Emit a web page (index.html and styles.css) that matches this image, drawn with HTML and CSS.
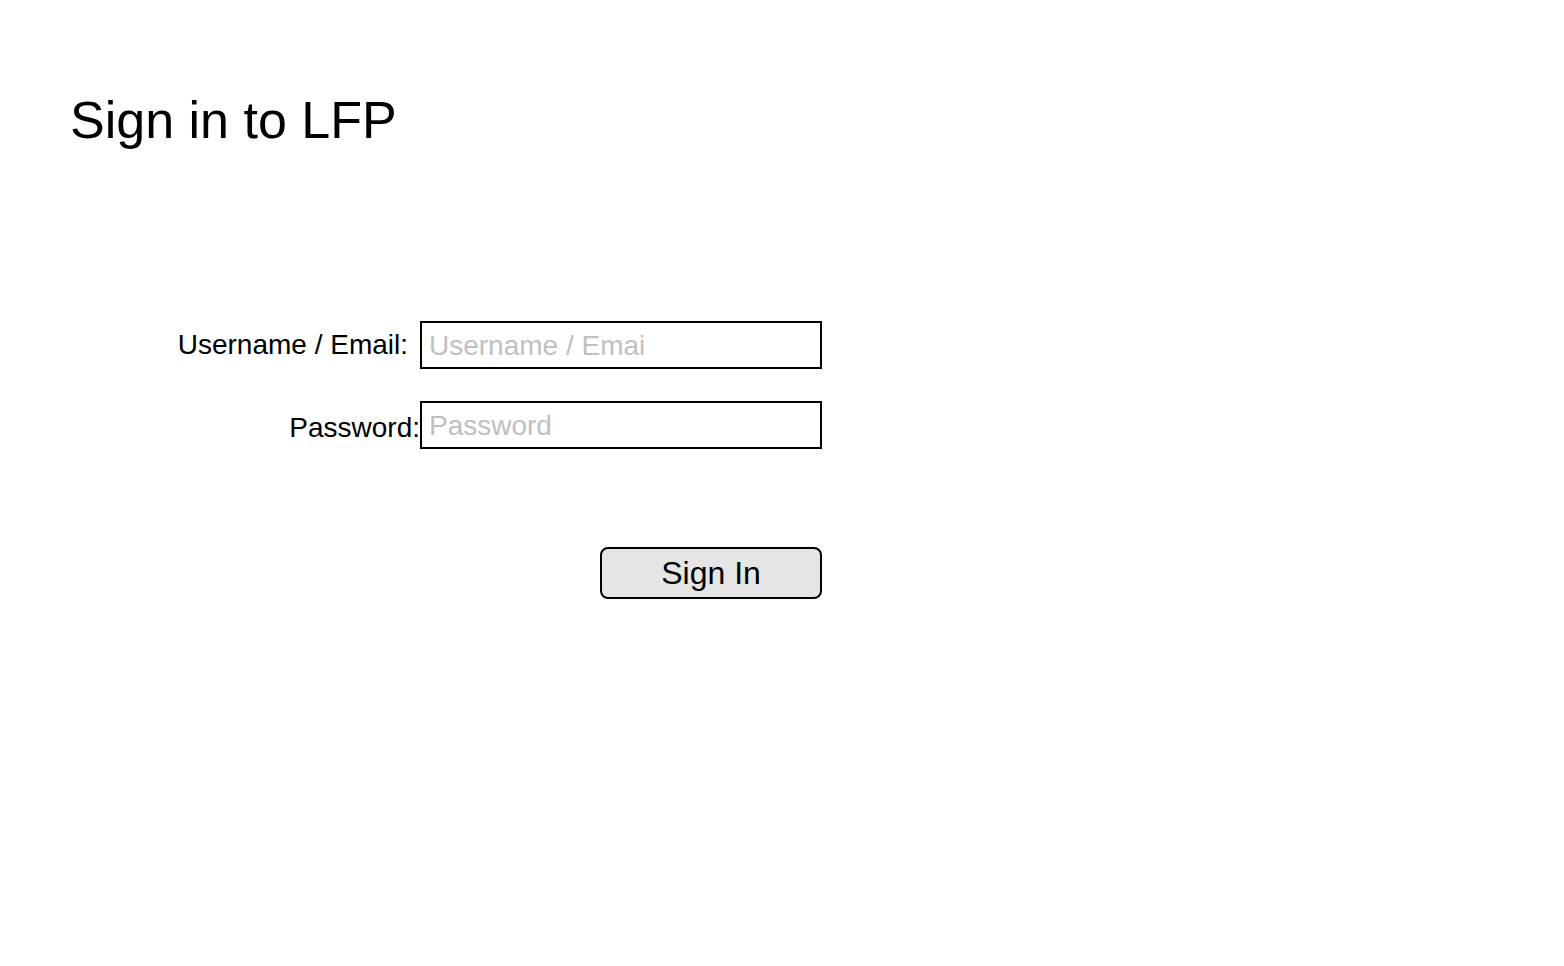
FILE: index.html
```html
<!DOCTYPE html>
<html lang="en">
<head>
<meta charset="utf-8">
<title>Sign in to LFP</title>
<link rel="stylesheet" href="styles.css">
</head>
<body>
<main class="page">
  <h1 class="title">Sign in to LFP</h1>
  <form class="signin">
    <div class="fields">
      <label class="label label-user" for="user">Username / Email:</label>
      <input class="field" id="user" type="text" placeholder="Username / Emai">
      <label class="label label-pass" for="pass">Password:</label>
      <input class="field" id="pass" type="password" placeholder="Password">
    </div>
    <div class="actions">
      <button class="submit" type="button">Sign In</button>
    </div>
  </form>
</main>
</body>
</html>
```

FILE: styles.css
```css
html, body {
  margin: 0;
  padding: 0;
  background: #fff;
}

body {
  font-family: "Liberation Sans", Arial, sans-serif;
  color: #000;
}

.page {
  padding: 90px 0 0 70px;
}

.title {
  margin: 0;
  font-size: 52px;
  font-weight: 400;
  line-height: normal;
}

.signin {
  width: 752px;
  margin-top: 171px;
}

.fields {
  display: grid;
  grid-template-columns: 350px 402px;
  grid-auto-rows: 48px;
  row-gap: 32px;
}

.label {
  font-size: 28px;
  text-align: right;
  align-self: center;
  line-height: 1;
}

.label-user {
  padding-right: 12px;
}

.label-pass {
  padding-top: 6px;
}

.field {
  box-sizing: border-box;
  width: 402px;
  height: 48px;
  margin: 0;
  padding: 2px 7px 0;
  border: 2px solid #000;
  border-radius: 0;
  font-family: "Liberation Sans", Arial, sans-serif;
  font-size: 28px;
  color: #000;
  background: #fff;
  outline: none;
}

.field::placeholder {
  color: #c0c0c0;
}

.actions {
  display: flex;
  justify-content: flex-end;
  padding-top: 98px;
}

.submit {
  box-sizing: border-box;
  width: 222px;
  height: 52px;
  margin: 0;
  padding: 0;
  border: 2px solid #000;
  border-radius: 8px;
  background: #e5e5e5;
  font-family: "Liberation Sans", Arial, sans-serif;
  font-size: 32px;
  color: #000;
}
```
